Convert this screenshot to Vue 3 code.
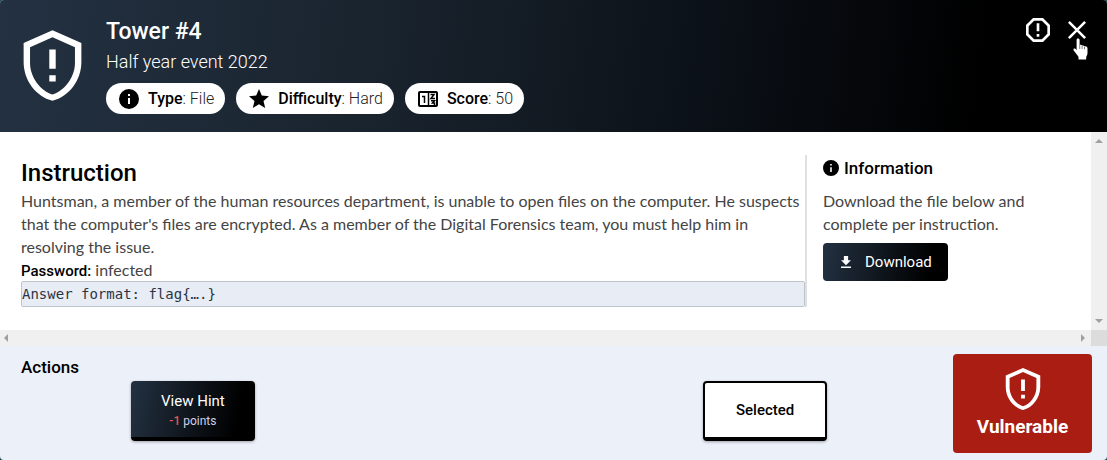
<script setup>
const tags = [
  { icon: 'info', label: 'Type', value: 'File' },
  { icon: 'star', label: 'Difficulty', value: 'Hard' },
  { icon: 'score', label: 'Score', value: '50' },
]
</script>

<template>
  <main class="dialog">
    <header class="head">
      <svg class="shield" viewBox="0 0 24 24" aria-hidden="true">
        <path d="M21 11C21 16.550 17.160 21.740 12 23 6.840 21.740 3 16.550 3 11V5L12 1 21 5V11M12 21C15.750 20 19 15.540 19 11.220V6.300L12 3.180 5 6.300V11.220C5 15.540 8.250 20 12 21M11 7H13V13H11V7M11 15H13V17H11V15" fill="#fff" fill-rule="evenodd" />
      </svg>
      <div class="title">
        <h1>Tower #4</h1>
        <p class="event">Half year event 2022</p>
        <ul class="tags">
          <li v-for="tag in tags" :key="tag.label">
            <svg v-if="tag.icon === 'info'" viewBox="0 0 24 24" aria-hidden="true">
              <path d="M12 2a10 10 0 1 0 0 20 10 10 0 0 0 0-20zm1 15h-2v-6h2zm0-8h-2V7h2z" />
            </svg>
            <svg v-else-if="tag.icon === 'star'" viewBox="0 0 24 24" aria-hidden="true">
              <path d="M12 17.3 18.2 21l-1.7-7L22 9.2l-7.2-.6L12 2 9.2 8.6 2 9.2 7.5 14l-1.7 7z" />
            </svg>
            <svg v-else viewBox="0 0 24 24" aria-hidden="true">
              <rect x="3" y="5" width="18" height="14" rx="1" fill="none" stroke="#000" stroke-width="2" />
              <path d="M12.500 5v14M6 9.500h2.500V16M14.500 7.500H18l-3 4h4M15 13.700h3.500l-2 2.300h2v2.500" fill="none" stroke="#000" stroke-width="1.500" />
            </svg>
            <span><b>{{ tag.label }}</b>: {{ tag.value }}</span>
          </li>
        </ul>
      </div>
      <div class="tools">
        <button type="button" aria-label="Report">
          <svg class="octagon" viewBox="0 0 24 24" aria-hidden="true">
            <path d="M8.270 3 3 8.270v7.460L8.270 21h7.460L21 15.730V8.270L15.730 3zM9.100 5h5.800L19 9.100v5.800L14.900 19H9.100L5 14.900V9.100zM11 15h2v2h-2zM11 7h2v6h-2z" fill="#fff" fill-rule="evenodd" />
          </svg>
        </button>
        <button type="button" class="close" aria-label="Close">
          <svg class="cross" viewBox="0 0 24 24" aria-hidden="true">
            <path d="m5.500 5.500 13 13M18.500 5.500l-13 13" fill="none" stroke="#fff" stroke-width="2" />
          </svg>
          <svg class="pointer" viewBox="0 0 16 22" aria-hidden="true">
            <path d="M5 0.500c1 0 1.600.6 1.600 1.500v5c1-.6 2-.3 2.500.6 1-.5 2-.1 2.400.7 1.400-.5 3 .1 3 1.900V15c0 2-.8 2.800-1.300 4v2.500H5.500V19C4.500 17 2.500 15.500.6 12.300c-.7-1.500.8-2.300 1.800-1.500l1.200 1.400V2c0-.9.500-1.500 1.400-1.500z" fill="#fff" />
            <path d="M6.700 7v4M9.100 8v3M11.500 8.800v2.500" stroke="#000" stroke-width=".5" />
          </svg>
        </button>
      </div>
    </header>

    <section class="scroller">
      <div class="content">
        <article class="instruction">
          <h2>Instruction</h2>
          <p>Huntsman, a member of the human resources department, is unable to open files on the computer. He suspects that the computer's files are encrypted. As a member of the Digital Forensics team, you must help him in resolving the issue.</p>
          <p><b>Password:</b> infected</p>
          <pre>Answer format: flag{….}</pre>
        </article>
        <aside class="info">
          <h3>
            <svg viewBox="2 2 20 20" aria-hidden="true">
              <path d="M12 2a10 10 0 1 0 0 20 10 10 0 0 0 0-20zm1 15h-2v-6h2zm0-8h-2V7h2z" />
            </svg>
            Information
          </h3>
          <p>Download the file below and complete per instruction.</p>
          <button type="button" class="download">
            <svg viewBox="5 3 14 17" aria-hidden="true">
              <path d="M19 9h-4V3H9v6H5l7 7zM5 18v2h14v-2z" fill="#fff" />
            </svg>
            Download
          </button>
        </aside>
      </div>
      <div class="track vertical" aria-hidden="true">
        <svg viewBox="0 0 8 8"><path d="M0 6 4 2l4 4z" /></svg>
        <svg viewBox="0 0 8 8"><path d="M0 2h8L4 6z" /></svg>
      </div>
      <div class="track horizontal" aria-hidden="true">
        <svg viewBox="0 0 8 8"><path d="M6 0v8L2 4z" /></svg>
        <svg viewBox="0 0 8 8"><path d="M2 0v8l4-4z" /></svg>
      </div>
      <div class="corner"></div>
    </section>

    <footer class="foot">
      <section class="actions">
        <h3>Actions</h3>
        <div class="choices">
          <button type="button" class="choice hint">
            <span>View Hint</span>
            <small><b>-1</b> points</small>
          </button>
          <button type="button" class="choice selected">Selected</button>
        </div>
      </section>
      <div class="status">
        <svg viewBox="0 0 24 24" aria-hidden="true">
          <path d="M21 11C21 16.550 17.160 21.740 12 23 6.840 21.740 3 16.550 3 11V5L12 1 21 5V11M12 21C15.750 20 19 15.540 19 11.220V6.300L12 3.180 5 6.300V11.220C5 15.540 8.250 20 12 21M11 7H13V13H11V7M11 15H13V17H11V15" fill="#fff" fill-rule="evenodd" />
        </svg>
        <strong>Vulnerable</strong>
      </div>
    </footer>
  </main>
</template>

<style>
body {
  background: #1c4a55;
}
</style>

<style scoped>
* {
  box-sizing: border-box;
}
h1, h2, h3, p, ul, pre {
  margin: 0;
  padding: 0;
}
button {
  font: inherit;
  padding: 0;
  border: 0;
  background: none;
  cursor: pointer;
}
svg {
  display: block;
  flex: none;
}
.dialog {
  display: flex;
  flex-direction: column;
  min-height: 100vh;
  overflow: hidden;
  border-radius: 4px;
  background: #ecf0f8;
  color: #000;
  font-family: Roboto, "Liberation Sans", sans-serif;
  font-size: 16px;
  line-height: 23px;
}
.head {
  display: flex;
  gap: 15px;
  padding: 14px 15px 18px 14px;
  color: #fff;
  background: linear-gradient(97deg, #233142 0%, #19232d 35%, #0b1017 65%, #000 88%);
}
.shield {
  width: 77px;
  height: 77px;
  margin-top: 13px;
}
.title {
  flex: 1;
  padding-top: 2px;
}
h1 {
  font-size: 23px;
  line-height: 32px;
  font-weight: 500;
}
.event {
  font-size: 18px;
  line-height: 28px;
  font-weight: 300;
}
.tags {
  display: flex;
  gap: 11px;
  margin-top: 7px;
  list-style: none;
}
.tags li {
  display: flex;
  align-items: center;
  gap: 7px;
  height: 31px;
  padding: 0 11px;
  border-radius: 16px;
  background: #fff;
  color: #222;
  font-weight: 300;
}
.tags svg {
  width: 24px;
  height: 24px;
}
b {
  font-weight: 500;
  color: #000;
}
.tools {
  display: flex;
  align-items: center;
  gap: 8px;
  align-self: flex-start;
}
.tools button {
  position: relative;
}
.octagon {
  width: 32px;
  height: 32px;
}
.cross {
  width: 30px;
  height: 30px;
}
.pointer {
  position: absolute;
  left: 11px;
  top: 23px;
  width: 16px;
  height: 22px;
}
.scroller {
  display: grid;
  grid-template-columns: 1fr 16px;
  background: #fff;
}
.content {
  display: grid;
  grid-template-columns: 3fr 1fr;
  align-items: start;
  padding: 23px 22px 23px 21px;
  color: #444;
}
.instruction {
  border-right: 2px solid #dfe0e4;
}
.instruction p {
  font-family: Lato, Roboto, sans-serif;
}
.instruction b {
  font-family: Roboto, sans-serif;
  font-size: 15px;
  line-height: 1;
}
h2 {
  padding-top: 2px;
  color: #000;
  font-size: 24px;
  line-height: 32px;
  font-weight: 500;
}
pre {
  height: 26px;
  border: 1px solid #bfc3cb;
  border-radius: 2px;
  background: #e8ecf4;
  color: #2c3444;
  font-family: "DejaVu Sans Mono", monospace;
  font-size: 14px;
  line-height: 24px;
}
.info {
  padding-left: 16px;
}
h3 {
  display: flex;
  align-items: center;
  gap: 5px;
  color: #000;
  font-size: 17px;
  line-height: 26px;
  font-weight: 500;
}
.info h3 svg {
  width: 16px;
  height: 16px;
}
.info p {
  margin: 8px 0;
  font-family: Lato, Roboto, sans-serif;
}
.download {
  display: flex;
  align-items: center;
  gap: 14px;
  height: 38px;
  padding: 0 16px 0 18px;
  border-radius: 4px;
  background: linear-gradient(100deg, #233142, #000 85%);
  color: #fff;
  font-size: 15px;
}
.download svg {
  width: 10px;
  height: 12px;
}
.track {
  display: flex;
  justify-content: space-between;
  align-items: center;
  background: #f0f0f0;
}
.track svg {
  width: 8px;
  height: 8px;
  fill: #a0a0a0;
}
.vertical {
  flex-direction: column;
  padding: 5px 0;
}
.horizontal {
  height: 16px;
  padding: 0 4px 0 2px;
}
.corner {
  background: #dcdcdc;
}
.foot {
  flex: 1;
  display: flex;
  align-items: flex-start;
  gap: 16px;
  padding: 8px 15px 7px 21px;
}
.actions {
  flex: 1;
}
.choices {
  display: flex;
  justify-content: space-between;
  margin-top: 1px;
  padding: 0 12%;
}
.choice {
  display: flex;
  flex-direction: column;
  align-items: center;
  justify-content: center;
  width: 124px;
  height: 60px;
  border-radius: 4px;
  line-height: 20px;
  box-shadow: 0 1px 3px #0005;
}
.hint {
  padding-top: 3px;
  border-bottom: 4px solid #000;
  background: linear-gradient(100deg, #233142, #000 85%);
  color: #fff;
  font-size: 15px;
}
.hint small {
  font-size: 12px;
  color: #d0d0e8;
}
.hint b {
  color: #e05a5a;
}
.selected {
  border: 2px solid #000;
  border-bottom-width: 4px;
  background: #fff;
  color: #000;
  font-size: 15px;
  font-weight: 500;
}
.status {
  display: flex;
  flex-direction: column;
  align-items: center;
  width: 139px;
  height: 99px;
  padding-top: 12px;
  border-radius: 4px;
  background: #a91d12;
  color: #fff;
}
.status svg {
  width: 46px;
  height: 46px;
}
.status strong {
  font-size: 19px;
  line-height: 29px;
  font-weight: 700;
}
</style>
